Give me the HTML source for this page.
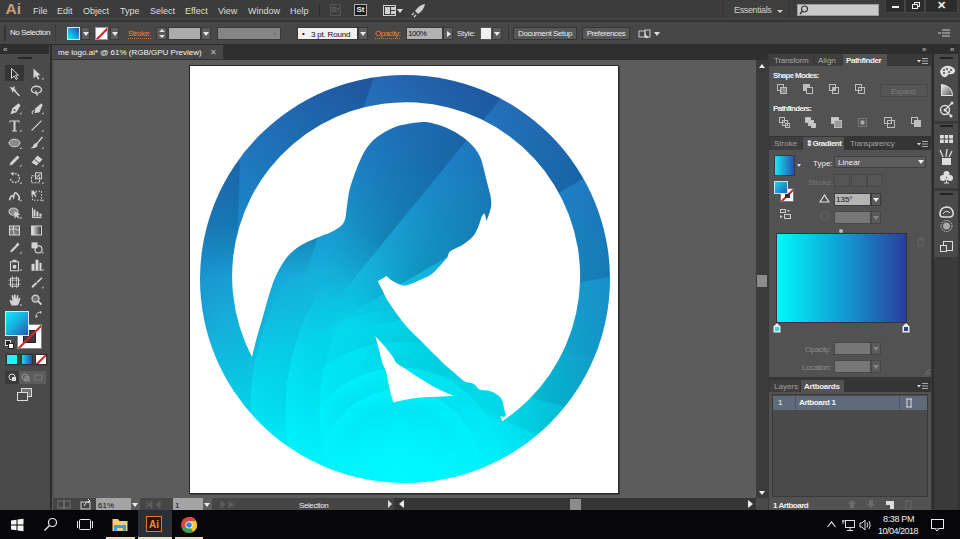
<!DOCTYPE html>
<html><head><meta charset="utf-8">
<style>
*{margin:0;padding:0;box-sizing:border-box}
html,body{width:960px;height:539px;overflow:hidden;background:#5c5c5c;font-family:"Liberation Sans",sans-serif;color:#e0e0e0}
.a{position:absolute}
.t{position:absolute;white-space:nowrap;font-size:9px;line-height:10px;color:#e6e6e6}
#menu{left:0;top:0;width:960px;height:21px;background:linear-gradient(180deg,#3c3c3c 0px,#3c3c3c 17px,#434343 18px,#434343 20px,#333 20px)}
.m{position:absolute;top:5px;font-size:9px;line-height:12px;color:#dcdcdc;white-space:nowrap}
#ctrl{left:0;top:21px;width:960px;height:24px;background:#474747;border-top:1px solid #343434;border-bottom:1px solid #2c2c2c}
#tools{left:0;top:45px;width:52px;height:465px;background:#4a4a4a;border-right:2px solid #2c2c2c}
#tabbar{left:51px;top:45px;width:717px;height:15px;background:#2f2f2f}
#canvas{left:52px;top:60px;width:704px;height:438px;background:#5c5c5c;border-left:2px solid #545454}
#vscroll{left:756px;top:60px;width:12px;height:438px;background:#3b3b3b}
#status{left:53px;top:498px;width:715px;height:12px;background:#3f3f3f}
#dock{left:768px;top:45px;width:164px;height:465px;background:#3a3a3a}
#strip{left:932px;top:45px;width:28px;height:465px;background:#3a3a3a}
#task{left:0;top:510px;width:960px;height:29px;background:#07060b}
.dd{position:absolute;background:#5d5d5d;border:1px solid #3a3a3a}
.dd:after{content:"";position:absolute;left:50%;top:50%;margin-left:-3px;margin-top:-2px;border-left:3px solid transparent;border-right:3px solid transparent;border-top:4px solid #e8e8e8}
.fld{position:absolute;background:#a9a9a9;border:1px solid #393939}
.btn{position:absolute;background:#575757;border:1px solid #353535;font-size:8px;line-height:11px;color:#e8e8e8;text-align:center;white-space:nowrap;letter-spacing:-0.4px}
.orng{color:#e08a3a}
</style></head><body>
<!-- MENU BAR -->
<div id="menu" class="a">
  <div class="a" style="left:5.5px;top:0px;font-size:15.5px;line-height:18px;color:#caa07c;font-weight:bold;letter-spacing:0px">Ai</div>
  <div class="m" style="left:33px">File</div>
  <div class="m" style="left:57px">Edit</div>
  <div class="m" style="left:83px">Object</div>
  <div class="m" style="left:120px">Type</div>
  <div class="m" style="left:150px">Select</div>
  <div class="m" style="left:185px">Effect</div>
  <div class="m" style="left:218px">View</div>
  <div class="m" style="left:248px">Window</div>
  <div class="m" style="left:290px">Help</div>
  <div class="a" style="left:319px;top:4px;width:1px;height:13px;background:#2c2c2c"></div>
  <div class="a" style="left:330px;top:4px;width:11px;height:12px;border:1px solid #555;background:#3e3e3e;font-size:7px;line-height:10px;color:#5c5c5c;text-align:center;font-weight:bold">Br</div>
  <div class="a" style="left:354px;top:4px;width:13px;height:12px;border:1px solid #b0b0b0;background:#1c1c1c;font-size:8px;line-height:10px;color:#e8e8e8;text-align:center;font-weight:bold">St</div>
  <div class="a" style="left:383px;top:5px;width:13px;height:11px;border:1px solid #d0d0d0;background:#3c3c3c"><div class="a" style="left:1px;top:1px;width:5px;height:7px;background:#d0d0d0"></div><div class="a" style="left:7px;top:1px;width:4px;height:3px;background:#d0d0d0"></div><div class="a" style="left:7px;top:5px;width:4px;height:3px;background:#d0d0d0"></div></div>
  <div class="a" style="left:397px;top:9px;border-left:3px solid transparent;border-right:3px solid transparent;border-top:4px solid #ddd"></div>
  <svg class="a" style="left:411px;top:3px" width="16" height="15" viewBox="0 0 16 15"><path d="M14,1 Q8,2 4,8 L7,11 Q13,7 14,1 Z" fill="#d0d0d0"/><path d="M3,10 L1,12 M5,12 L3,14" stroke="#d0d0d0" stroke-width="1.3"/></svg>
  <div class="a" style="left:723px;top:1px;width:66px;height:17px;background:#3f3f3f;border-left:1px solid #363636;border-right:1px solid #363636"></div><div class="m" style="left:734px;top:4px;color:#cfcfcf;letter-spacing:-0.35px">Essentials</div>
  <div class="a" style="left:777px;top:10px;border-left:3px solid transparent;border-right:3px solid transparent;border-top:3px solid #ccc"></div>
  <div class="a" style="left:797px;top:4px;width:82px;height:12px;background:#c9c9c9;border:1px solid #9a9a9a"></div>
  <svg class="a" style="left:799px;top:5px" width="10" height="10" viewBox="0 0 10 10"><circle cx="5.5" cy="4" r="3" fill="none" stroke="#333" stroke-width="1.2"/><path d="M3.5,6 L1,9" stroke="#333" stroke-width="1.4"/></svg>
  <div class="a" style="left:885px;top:0;width:20px;height:13px;background:#2c2c2c;border:1px solid #444;border-top:none"><div class="a" style="left:6px;top:6px;width:7px;height:2px;background:#eee"></div></div>
  <div class="a" style="left:905px;top:0;width:20px;height:13px;background:#2c2c2c;border:1px solid #444;border-top:none"><div class="a" style="left:8px;top:2px;width:6px;height:5px;border:1px solid #eee"></div><div class="a" style="left:6px;top:4px;width:6px;height:5px;border:1px solid #eee;background:#2c2c2c"></div></div>
  <div class="a" style="left:925px;top:0;width:33px;height:13px;background:#2c2c2c;border:1px solid #444;border-top:none;font-size:11px;line-height:11px;color:#f0f0f0;text-align:center;font-weight:bold">&#x2715;</div>
</div>
<!-- CONTROL BAR -->
<div id="ctrl" class="a">
  <div class="a" style="left:4px;top:3px;width:2px;height:16px;background:#333"></div>
  <div class="t" style="left:10px;top:6px;font-size:8px;color:#f0f0f0;letter-spacing:-0.45px">No Selection</div>
  <div class="a" style="left:55px;top:3px;width:1px;height:16px;background:#3a3a3a"></div>
  <div class="a" style="left:67px;top:5px;width:13px;height:13px;border:1px solid #cfe8f5;background:linear-gradient(45deg,#10f0f8,#1aa0dc 50%,#2050b0)"></div>
  <div class="dd" style="left:81px;top:5px;width:9px;height:13px"></div>
  <div class="a" style="left:95px;top:5px;width:13px;height:13px;background:#fff;border:1px solid #999;overflow:hidden"><div class="a" style="left:-3px;top:5px;width:18px;height:1.5px;background:#e01020;transform:rotate(-45deg)"></div></div>
  <div class="dd" style="left:110px;top:5px;width:9px;height:13px"></div>
  <div class="t orng" style="left:128px;top:7px;font-size:8px;border-bottom:1px dotted #c07a30;line-height:9px;letter-spacing:-0.4px">Stroke:</div>
  <div class="a" style="left:156px;top:5px;width:11px;height:13px;background:#5a5a5a;border:1px solid #3a3a3a"><div class="a" style="left:2px;top:1px;border-left:3px solid transparent;border-right:3px solid transparent;border-bottom:3px solid #ddd"></div><div class="a" style="left:2px;top:7px;border-left:3px solid transparent;border-right:3px solid transparent;border-top:3px solid #ddd"></div></div>
  <div class="fld" style="left:168px;top:5px;width:33px;height:13px;background:#ababab"></div>
  <div class="dd" style="left:201px;top:5px;width:10px;height:13px"></div>
  <div class="fld" style="left:217px;top:5px;width:64px;height:13px;background:#868686"></div>
  <div class="a" style="left:273px;top:11px;border-left:2px solid transparent;border-right:2px solid transparent;border-top:2px solid #6a6a6a"></div>
  <div class="fld" style="left:297px;top:5px;width:61px;height:13px;background:#f0f0f0"></div>
  <div class="t" style="left:302px;top:7px;font-size:8px;color:#111">&#8226;</div><div class="t" style="left:311px;top:7.5px;font-size:8px;color:#111;letter-spacing:-0.2px">3 pt. Round</div>
  <div class="dd" style="left:358px;top:5px;width:10px;height:13px"></div>
  <div class="t orng" style="left:375px;top:7px;font-size:8px;border-bottom:1px dotted #c07a30;line-height:9px;letter-spacing:-0.5px">Opacity:</div>
  <div class="fld" style="left:406px;top:5px;width:37px;height:13px;background:#b2b2b2"></div>
  <div class="t" style="left:408px;top:7px;font-size:8px;color:#111;letter-spacing:-0.5px">100%</div>
  <div class="a" style="left:443px;top:5px;width:10px;height:13px;background:#5d5d5d;border:1px solid #3a3a3a"><div class="a" style="left:3px;top:3px;border-top:3px solid transparent;border-bottom:3px solid transparent;border-left:4px solid #e8e8e8"></div></div>
  <div class="t" style="left:457px;top:7px;font-size:8px;letter-spacing:-0.3px">Style:</div>
  <div class="a" style="left:480px;top:5px;width:12px;height:13px;background:#efefef;border:1px solid #555"></div>
  <div class="dd" style="left:492px;top:5px;width:10px;height:13px"></div>
  <div class="a" style="left:508px;top:3px;width:1px;height:16px;background:#363636"></div>
  <div class="btn" style="left:513px;top:5px;width:64px;height:13px">Document Setup</div>
  <div class="btn" style="left:582px;top:5px;width:48px;height:13px">Preferences</div>
  <svg class="a" style="left:638px;top:7px" width="14" height="11" viewBox="0 0 14 11"><rect x="1" y="2" width="6" height="6" fill="none" stroke="#ccc"/><rect x="7" y="1" width="5" height="7" fill="none" stroke="#ccc"/><path d="M6,4 L11,9 L8,9 Z" fill="#ddd"/></svg>
  <div class="a" style="left:654px;top:10px;border-left:3px solid transparent;border-right:3px solid transparent;border-top:4px solid #ddd"></div>
  <svg class="a" style="left:938px;top:7px" width="12" height="9" viewBox="0 0 12 9"><path d="M0,4 L3,4" stroke="#ccc"/><path d="M4,1 L12,1 M4,4 L12,4 M4,7 L12,7" stroke="#ccc" stroke-width="1"/></svg>
</div>
<!-- TOOLS -->
<div id="tools" class="a">
  <div class="a" style="left:0;top:0;width:49px;height:9px;background:#2e2e2e"></div>
  <div class="t" style="left:3px;top:0;font-size:8px;line-height:9px;color:#ccc">&#171;</div>
  <div class="a" style="left:18px;top:12px;width:14px;height:2px;background:#262626"></div>
  <div class="a" style="left:5px;top:20px;width:19px;height:16px;background:#353535"></div>
  <svg class="a" style="left:0;top:0" width="51" height="465" viewBox="0 45 51 465"><g transform="translate(8.5,67.4)"><path d="M3,1 L3,11 L5.5,8.5 L7.5,12 L9,11.3 L7,7.8 L10,7.8 Z" fill="none" stroke="#d4d4d4" stroke-width="1"/></g><g transform="translate(30.5,67.4)"><path d="M3,1 L3,11 L5.5,8.5 L7.5,12 L9,11.3 L7,7.8 L10,7.8 Z" fill="#d4d4d4"/></g><path d="M41.5,79.4 L43.5,77.4 L43.5,79.4 Z" fill="#d4d4d4"/><g transform="translate(8.5,84.8)"><path d="M1,2 L4,3 L6,1 L6,4 L8,6 L5,6 L4,8 L3,5 Z" fill="#d4d4d4"/><path d="M6,6 L11,11" stroke="#d4d4d4" stroke-width="1.5"/></g><g transform="translate(30.5,84.8)"><ellipse cx="6" cy="5" rx="5" ry="3.5" fill="none" stroke="#d4d4d4" stroke-width="1.4"/><path d="M5,6 L7,11" stroke="#d4d4d4" stroke-width="1.3"/></g><g transform="translate(8.5,102.2)"><path d="M10,1 L12,3 L8,10 L2,12 L4,6 Z" fill="#d4d4d4"/><circle cx="6" cy="8" r="1" fill="#4b4b4b"/></g><path d="M19.5,114.2 L21.5,112.2 L21.5,114.2 Z" fill="#d4d4d4"/><g transform="translate(30.5,102.2)"><path d="M11,1 L12,3 L9,10 L4,11 L5,6 Z" fill="#d4d4d4"/><path d="M4,8 Q0,9 2,12" fill="none" stroke="#d4d4d4"/></g><path d="M41.5,114.2 L43.5,112.2 L43.5,114.2 Z" fill="#d4d4d4"/><g transform="translate(8.5,119.6)"><path d="M1,1 L11,1 L11,3 L10,3 L10,2 L7,2 L7,11 L8.5,11 L8.5,12 L3.5,12 L3.5,11 L5,11 L5,2 L2,2 L2,3 L1,3 Z" fill="#d4d4d4"/></g><path d="M19.5,131.6 L21.5,129.6 L21.5,131.6 Z" fill="#d4d4d4"/><g transform="translate(30.5,119.6)"><path d="M1,11 L11,1" stroke="#d4d4d4" stroke-width="1.2"/></g><path d="M41.5,131.6 L43.5,129.6 L43.5,131.6 Z" fill="#d4d4d4"/><g transform="translate(8.5,137)"><ellipse cx="6" cy="6" rx="5.5" ry="3.8" fill="#8a8a8a" stroke="#d4d4d4" stroke-width="1"/></g><path d="M19.5,149 L21.5,147 L21.5,149 Z" fill="#d4d4d4"/><g transform="translate(30.5,137)"><path d="M12,0 L6,7" stroke="#d4d4d4" stroke-width="1.3"/><path d="M6,6 Q8,8 6,10 Q3,12 0,11 Q3,10 3,8 Q4,6 6,6 Z" fill="#d4d4d4"/></g><path d="M41.5,149 L43.5,147 L43.5,149 Z" fill="#d4d4d4"/><g transform="translate(8.5,154.4)"><path d="M9,1 L11,3 L4,10 L1,11 L2,8 Z" fill="#d4d4d4"/></g><path d="M19.5,166.4 L21.5,164.4 L21.5,166.4 Z" fill="#d4d4d4"/><g transform="translate(30.5,154.4)"><path d="M7,1 L12,5 L6,11 L1,8 Z" fill="#d4d4d4"/><path d="M4,5 L9,9" stroke="#4b4b4b"/></g><path d="M41.5,166.4 L43.5,164.4 L43.5,166.4 Z" fill="#d4d4d4"/><g transform="translate(8.5,171.8)"><path d="M2,7 A4.5,4.5 0 1 0 5,2" fill="none" stroke="#d4d4d4" stroke-width="1.2" stroke-dasharray="2,1"/><path d="M5,0 L5,4 L2,2 Z" fill="#d4d4d4"/></g><path d="M19.5,183.8 L21.5,181.8 L21.5,183.8 Z" fill="#d4d4d4"/><g transform="translate(30.5,171.8)"><rect x="1" y="4" width="8" height="7" fill="none" stroke="#d4d4d4" stroke-dasharray="2,1"/><rect x="5" y="1" width="6" height="6" fill="none" stroke="#d4d4d4"/><path d="M6,6 L10,2" stroke="#d4d4d4"/></g><path d="M41.5,183.8 L43.5,181.8 L43.5,183.8 Z" fill="#d4d4d4"/><g transform="translate(8.5,189.2)"><path d="M1,11 Q3,4 5,8 Q6,1 9,5 Q12,8 10,11" fill="none" stroke="#d4d4d4" stroke-width="1.6"/></g><path d="M19.5,201.2 L21.5,199.2 L21.5,201.2 Z" fill="#d4d4d4"/><g transform="translate(30.5,189.2)"><rect x="2" y="2" width="9" height="9" fill="none" stroke="#d4d4d4" stroke-dasharray="1.5,1.5"/><path d="M1,1 L1,7 L3,5 L5,8 L6,7 L4,4 L7,4 Z" fill="#d4d4d4"/></g><path d="M41.5,201.2 L43.5,199.2 L43.5,201.2 Z" fill="#d4d4d4"/><g transform="translate(8.5,206.6)"><ellipse cx="5" cy="5" rx="4.5" ry="3.5" fill="#8a8a8a" stroke="#d4d4d4"/><path d="M6,5 L6,12 L8,10 L10,12 L11,11 L9,9 L12,8 Z" fill="#d4d4d4"/></g><path d="M19.5,218.6 L21.5,216.6 L21.5,218.6 Z" fill="#d4d4d4"/><g transform="translate(30.5,206.6)"><path d="M2,1 L2,11 L11,11" fill="none" stroke="#d4d4d4"/><rect x="3" y="3" width="2" height="7" fill="#d4d4d4"/><rect x="6" y="5" width="2" height="5" fill="#d4d4d4"/><rect x="9" y="7" width="2" height="3" fill="#d4d4d4"/></g><g transform="translate(8.5,224)"><rect x="1" y="2" width="10" height="9" fill="#777" stroke="#d4d4d4"/><path d="M1,6 Q6,3 11,7 M5,2 Q4,7 6,11" fill="none" stroke="#d4d4d4"/></g><g transform="translate(30.5,224)"><defs><linearGradient id="tg"><stop offset="0" stop-color="#eee"/><stop offset="1" stop-color="#333"/></linearGradient></defs><rect x="1" y="2" width="10" height="9" fill="url(#tg)" stroke="#d4d4d4"/></g><g transform="translate(8.5,241.4)"><path d="M9,1 L11,3 L9,5 L4,10 L2,11 L2,9 L7,4 Z" fill="#d4d4d4"/></g><path d="M19.5,253.4 L21.5,251.4 L21.5,253.4 Z" fill="#d4d4d4"/><g transform="translate(30.5,241.4)"><rect x="1" y="1" width="6" height="6" fill="#d4d4d4"/><circle cx="8" cy="8" r="3.5" fill="none" stroke="#d4d4d4" stroke-width="1.2"/></g><path d="M41.5,253.4 L43.5,251.4 L43.5,253.4 Z" fill="#d4d4d4"/><g transform="translate(8.5,258.8)"><rect x="2" y="3" width="8" height="9" fill="none" stroke="#d4d4d4"/><rect x="4" y="1" width="4" height="2" fill="#d4d4d4"/><circle cx="6" cy="8" r="2" fill="#d4d4d4"/></g><path d="M19.5,270.8 L21.5,268.8 L21.5,270.8 Z" fill="#d4d4d4"/><g transform="translate(30.5,258.8)"><rect x="1" y="5" width="3" height="7" fill="#d4d4d4"/><rect x="5" y="1" width="3" height="11" fill="#d4d4d4"/><rect x="9" y="4" width="2" height="8" fill="#d4d4d4"/></g><path d="M41.5,270.8 L43.5,268.8 L43.5,270.8 Z" fill="#d4d4d4"/><g transform="translate(8.5,276.2)"><rect x="2" y="2" width="8" height="8" fill="none" stroke="#d4d4d4"/><path d="M0,4 L12,4 M0,8 L12,8 M4,0 L4,12 M8,0 L8,12" stroke="#d4d4d4" stroke-width="0.7"/></g><g transform="translate(30.5,276.2)"><path d="M11,1 L12,2 L3,11 L1,12 L2,9 Z" fill="#d4d4d4"/><path d="M5,5 L8,8" stroke="#4b4b4b"/></g><path d="M41.5,288.2 L43.5,286.2 L43.5,288.2 Z" fill="#d4d4d4"/><g transform="translate(8.5,293.6)"><path d="M3,12 L1,7 L2,6 L4,8 L3,2 L4.5,1.5 L5.5,6 L5.5,1 L7,1 L7.5,6 L8.5,1.5 L10,2 L9.5,6.5 L11,4 L12,5 L10,11 L8,12 Z" fill="#d4d4d4"/></g><path d="M19.5,305.6 L21.5,303.6 L21.5,305.6 Z" fill="#d4d4d4"/><g transform="translate(30.5,293.6)"><circle cx="5" cy="5" r="3.5" fill="#777" stroke="#d4d4d4" stroke-width="1.3"/><path d="M7.5,7.5 L11,11" stroke="#d4d4d4" stroke-width="2"/></g></svg><div class="a" style="left:5px;top:266px;width:24px;height:25px;background:linear-gradient(135deg,#12e6f6 0%,#18b4e2 45%,#2456b0 100%);border:1px solid #dde6ee;z-index:2"></div>
<div class="a" style="left:17px;top:279px;width:25px;height:25px;background:#fff;border:1px solid #888;overflow:hidden"><div class="a" style="left:5px;top:5px;width:13px;height:13px;background:#3a3a3a;border:1px solid #222"></div><div class="a" style="left:-6px;top:11px;width:36px;height:2px;background:#e0202a;transform:rotate(-45deg)"></div></div>
<svg class="a" style="left:35px;top:266px" width="8" height="8" viewBox="0 0 8 8"><path d="M1,6 Q1,1 6,1" fill="none" stroke="#ccc"/><path d="M5,0 L7,1 L5,3 Z M0,5 L1,7 L3,5 Z" fill="#ccc"/></svg>
<svg class="a" style="left:5px;top:295px" width="9" height="9" viewBox="0 0 9 9"><rect x="0.5" y="0.5" width="5" height="5" fill="#222" stroke="#ddd"/><rect x="3.5" y="3.5" width="5" height="5" fill="#fff" stroke="#222"/></svg>
<div class="a" style="left:5px;top:308px;width:43px;height:13px;background:#404040"></div>
<div class="a" style="left:6px;top:309px;width:12px;height:11px;border:1px solid #333;background:#1ef2f6"></div>
<div class="a" style="left:21px;top:309px;width:12px;height:11px;border:1px solid #333;background:linear-gradient(90deg,#16d8f0,#2450a8)"></div>
<div class="a" style="left:35px;top:309px;width:12px;height:11px;border:1px solid #333;background:#fff;overflow:hidden"><div class="a" style="left:-3px;top:4px;width:16px;height:2px;background:#e0202a;transform:rotate(-45deg)"></div></div>
<div class="a" style="left:5px;top:326px;width:41px;height:13px;background:#3a3a3a"></div>
<div class="a" style="left:19px;top:326px;width:27px;height:13px;background:#5c5c5c"></div>
<svg class="a" style="left:7px;top:327px" width="38" height="11" viewBox="0 0 38 11"><circle cx="5" cy="5" r="3" fill="none" stroke="#ddd"/><rect x="5" y="5" width="4" height="4" fill="#ddd"/><circle cx="18" cy="5" r="3" fill="none" stroke="#999"/><rect x="18" y="5" width="4" height="4" fill="none" stroke="#999"/><rect x="28" y="3" width="7" height="5" fill="none" stroke="#777"/></svg>
<svg class="a" style="left:16px;top:343px" width="17" height="14" viewBox="0 0 17 14"><rect x="5.5" y="0.5" width="10" height="8" fill="#777" stroke="#ddd"/><rect x="1.5" y="4.5" width="10" height="8" fill="#4b4b4b" stroke="#ddd"/></svg>


</div>
<div id="tabbar" class="a">
  <div class="a" style="left:1px;top:0;width:171px;height:14px;background:#474747"></div>
  <div class="t" style="left:7px;top:3px;font-size:8px;color:#f4f4f4">me logo.ai* @ 61% (RGB/GPU Preview)</div>
  <div class="t" style="left:159px;top:3px;font-size:8px;color:#bbb">&#x2715;</div>
</div>
<div id="canvas" class="a"></div>
<div id="vscroll" class="a">
  <div class="a" style="left:3px;top:4px;border-left:3px solid transparent;border-right:3px solid transparent;border-bottom:4px solid #eee"></div>
  <div class="a" style="left:1px;top:215px;width:10px;height:12px;background:#8c8c8c"></div>
  <div class="a" style="left:3px;top:431px;border-left:3px solid transparent;border-right:3px solid transparent;border-top:4px solid #eee"></div>
</div>
<div id="status" class="a">
  <div class="a" style="left:0;top:0;width:341px;height:12px;background:#454545"></div>
<svg class="a" style="left:4px;top:1px" width="40" height="11" viewBox="0 0 40 11"><rect x="1" y="2" width="6" height="7" fill="none" stroke="#777"/><rect x="7" y="2" width="6" height="7" fill="none" stroke="#777"/><rect x="24" y="3" width="9" height="7" fill="none" stroke="#ccc"/><path d="M27,7 Q28,3 33,2 L31,0 M33,2 L31,4" fill="none" stroke="#ddd"/></svg>
<div class="a" style="left:43px;top:0;width:35px;height:12px;background:#a4a4a4"></div>
<div class="t" style="left:45px;top:3px;font-size:8px;color:#111">61%</div>
<div class="a" style="left:78px;top:0;width:9px;height:12px;background:#5c5c5c"><div class="a" style="left:1px;top:5px;border-left:3px solid transparent;border-right:3px solid transparent;border-top:4px solid #eee"></div></div>
<svg class="a" style="left:93px;top:2px" width="30" height="9" viewBox="0 0 30 9"><path d="M1,1 L1,8 M6,1 L2,4.5 L6,8 Z M14,1 L10,4.5 L14,8 Z" fill="#5e5e5e" stroke="#5e5e5e"/></svg>
<div class="a" style="left:120px;top:0;width:30px;height:12px;background:#a4a4a4"></div>
<div class="t" style="left:122px;top:3px;font-size:8px;color:#111">1</div>
<div class="a" style="left:150px;top:0;width:9px;height:12px;background:#5c5c5c"><div class="a" style="left:1px;top:5px;border-left:3px solid transparent;border-right:3px solid transparent;border-top:4px solid #eee"></div></div>
<svg class="a" style="left:166px;top:2px" width="30" height="9" viewBox="0 0 30 9"><path d="M2,1 L6,4.5 L2,8 Z M10,1 L14,4.5 L10,8 Z M15,1 L15,8" fill="#5e5e5e" stroke="#5e5e5e"/></svg>
<div class="t" style="left:246px;top:3px;font-size:8px;color:#eee;letter-spacing:-0.4px">Selection</div>
<div class="a" style="left:335px;top:2px;border-top:4px solid transparent;border-bottom:4px solid transparent;border-left:4px solid #ddd"></div>
<div class="a" style="left:341px;top:0;width:374px;height:12px;background:#353535"></div>
<div class="a" style="left:346px;top:2px;border-top:4px solid transparent;border-bottom:4px solid transparent;border-right:5px solid #eee"></div>
<div class="a" style="left:517px;top:1px;width:11px;height:11px;background:#8c8c8c"></div>
<div class="a" style="left:695px;top:2px;border-top:4px solid transparent;border-bottom:4px solid transparent;border-left:5px solid #eee"></div>
<div class="a" style="left:703px;top:0;width:12px;height:12px;background:#4a4a4a"></div>

</div>
<div id="dock" class="a">
  <div class="a" style="left:0;top:0;width:164px;height:9px;background:#2e2e2e"></div>
<div class="t" style="left:154px;top:0;font-size:8px;line-height:9px;color:#ccc">&#187;</div>
<!-- panel 1 -->
<div class="a" style="left:1px;top:9px;width:162px;height:12px;background:#383838"></div>
<div class="a" style="left:2px;top:9px;width:43px;height:12px;background:#3f3f3f"></div>
<div class="t" style="left:6px;top:11px;font-size:8px;color:#a8a8a8;letter-spacing:-0.2px">Transform</div>
<div class="a" style="left:46px;top:9px;width:28px;height:12px;background:#3f3f3f"></div>
<div class="t" style="left:50px;top:11px;font-size:8px;color:#a8a8a8">Align</div>
<div class="a" style="left:75px;top:9px;width:44px;height:12px;background:#525252"></div>
<div class="t" style="left:78px;top:11px;font-size:8px;color:#f0f0f0;font-weight:bold;letter-spacing:-0.45px">Pathfinder</div>
<svg class="a" style="left:149px;top:13px" width="12" height="7" viewBox="0 0 12 7"><path d="M0,2 L4,2 L2,4.5 Z" fill="#ddd"/><path d="M5,0.5 L11,0.5 M5,3 L11,3 M5,5.5 L11,5.5" stroke="#aaa"/></svg>
<div class="a" style="left:1px;top:21px;width:162px;height:70px;background:#525252"></div>
<div class="t" style="left:5px;top:26px;font-size:8px;color:#f0f0f0;font-weight:bold;letter-spacing:-0.7px">Shape Modes:</div>
<svg class="a" style="left:1px;top:21px" width="162" height="69" viewBox="0 0 162 69">
 <g fill="none" stroke="#bdbdbd" stroke-width="1">
  <rect x="8.5" y="18.5" width="6" height="6"/><rect x="11.5" y="21.5" width="6" height="6" fill="#8a8a8a"/>
  <rect x="34.5" y="18.5" width="6" height="6" fill="#bbb"/><rect x="37.5" y="21.5" width="6" height="6" fill="#505050"/>
  <rect x="60.5" y="18.5" width="6" height="6"/><rect x="63.5" y="21.5" width="6" height="6"/><rect x="63.5" y="21.5" width="3" height="3" fill="#bbb"/>
  <rect x="86.5" y="18.5" width="6" height="6"/><rect x="89.5" y="21.5" width="6" height="6"/><rect x="89.5" y="21.5" width="3" height="3" fill="#505050"/>
 </g>
 <rect x="111.5" y="18.5" width="47" height="12" fill="#555" stroke="#484848"/>
 <text x="122" y="27.5" font-size="8" fill="#7a7a7a" font-family="Liberation Sans" letter-spacing="-0.5">Expand</text>
 <g fill="none" stroke="#bdbdbd" stroke-width="1">
  <rect x="10.5" y="51.5" width="5" height="5"/><rect x="13.5" y="54.5" width="5" height="5"/><rect x="16.5" y="57.5" width="4" height="4"/>
  <rect x="36.5" y="51.5" width="5" height="5" fill="#ccc"/><rect x="39.5" y="54.5" width="5" height="5" fill="#ccc"/><rect x="42.5" y="57.5" width="4" height="4" fill="#ccc"/>
  <rect x="62.5" y="51.5" width="7" height="6" fill="#ccc"/><rect x="65.5" y="54.5" width="7" height="7" fill="#999"/>
  <rect x="89.5" y="52.5" width="8" height="8" stroke="#777"/><rect x="91.5" y="54.5" width="4" height="4" fill="#aaa" stroke="none"/>
  <rect x="115.5" y="51.5" width="7" height="6"/><rect x="118.5" y="54.5" width="7" height="7"/>
  <rect x="142.5" y="51.5" width="6" height="6"/><rect x="145.5" y="54.5" width="6" height="6" fill="#bdbdbd"/>
 </g>
</svg>
<div class="t" style="left:5px;top:59px;font-size:8px;color:#f0f0f0;font-weight:bold;letter-spacing:-0.7px">Pathfinders:</div>
<!-- panel 2 -->
<div class="a" style="left:1px;top:91px;width:162px;height:14px;background:#353535"></div>
<div class="a" style="left:2px;top:92px;width:32px;height:13px;background:#3e3e3e"></div>
<div class="t" style="left:6px;top:94px;font-size:8px;color:#a0a0a0">Stroke</div>
<div class="a" style="left:35px;top:92px;width:41px;height:13px;background:#525252"></div>
<div class="t" style="left:38px;top:94px;font-size:8px;color:#f0f0f0;font-weight:bold;letter-spacing:-0.5px">&#8661;Gradient</div>
<div class="t" style="left:82px;top:94px;font-size:8px;color:#a0a0a0;letter-spacing:-0.35px">Transparency</div>
<svg class="a" style="left:149px;top:96px" width="12" height="7" viewBox="0 0 12 7"><path d="M0,2 L4,2 L2,4.5 Z" fill="#ddd"/><path d="M5,0.5 L11,0.5 M5,3 L11,3 M5,5.5 L11,5.5" stroke="#aaa"/></svg>
<div class="a" style="left:1px;top:105px;width:162px;height:227px;background:#525252"></div>
<div class="a" style="left:6px;top:110px;width:21px;height:21px;background:linear-gradient(90deg,#16e8f4,#2650b0);border:1px solid #3a3a3a"></div>
<div class="a" style="left:29px;top:119px;border-left:2px solid transparent;border-right:2px solid transparent;border-top:3px solid #ddd"></div>
<div class="a" style="left:12px;top:143px;width:14px;height:14px;background:#fff;border:1px solid #777;overflow:hidden"><div class="a" style="left:-3px;top:5px;width:20px;height:2px;background:#e0202a;transform:rotate(-45deg)"></div><div class="a" style="left:4px;top:4px;width:5px;height:5px;background:#333"></div></div>
<div class="a" style="left:6px;top:136px;width:14px;height:13px;background:linear-gradient(135deg,#18d8f0,#2060b8);border:1px solid #cfe0ea"></div>
<svg class="a" style="left:12px;top:164px" width="11" height="10" viewBox="0 0 11 10"><rect x="0.5" y="0.5" width="5" height="3" fill="none" stroke="#ccc"/><rect x="4.5" y="5.5" width="6" height="4" fill="none" stroke="#ccc"/><path d="M7,1 L10,1 L8.5,3 Z M0,6 L3,8 L0,9 Z" fill="#ccc"/></svg>
<div class="t" style="left:45px;top:114px;font-size:8px;color:#eee">Type:</div>
<div class="a" style="left:66px;top:111px;width:92px;height:12px;background:#5c5c5c;border:1px solid #404040"></div>
<div class="t" style="left:70px;top:113px;font-size:8px;color:#eee">Linear</div>
<div class="a" style="left:150px;top:115px;border-left:3px solid transparent;border-right:3px solid transparent;border-top:4px solid #eee"></div>
<div class="t" style="left:40px;top:133px;font-size:8px;color:#777">Stroke:</div>
<div class="a" style="left:66px;top:129px;width:16px;height:13px;background:#555;border:1px solid #484848"></div>
<div class="a" style="left:83px;top:129px;width:16px;height:13px;background:#555;border:1px solid #484848"></div>
<div class="a" style="left:99px;top:129px;width:16px;height:13px;background:#555;border:1px solid #484848"></div>
<svg class="a" style="left:51px;top:149px" width="11" height="9" viewBox="0 0 11 9"><path d="M1,8 L5.5,1 L10,8 Z" fill="none" stroke="#ddd" stroke-width="1.2"/></svg>
<div class="a" style="left:66px;top:148px;width:37px;height:13px;background:#b4b4b4;border:1px solid #3c3c3c"></div>
<div class="t" style="left:68px;top:150px;font-size:8px;color:#111">135&#176;</div>
<div class="a" style="left:103px;top:148px;width:10px;height:13px;background:#5c5c5c;border:1px solid #3c3c3c"><div class="a" style="left:1px;top:4px;border-left:3px solid transparent;border-right:3px solid transparent;border-top:4px solid #eee"></div></div>
<svg class="a" style="left:51px;top:166px" width="11" height="10" viewBox="0 0 11 10"><circle cx="5.5" cy="5" r="4" fill="none" stroke="#666"/></svg>
<div class="a" style="left:66px;top:166px;width:37px;height:13px;background:#777;border:1px solid #484848"></div>
<div class="a" style="left:103px;top:166px;width:10px;height:13px;background:#5a5a5a;border:1px solid #484848"><div class="a" style="left:1px;top:4px;border-left:3px solid transparent;border-right:3px solid transparent;border-top:4px solid #888"></div></div>
<div class="a" style="left:71px;top:184px;width:4px;height:4px;border-radius:2px;background:#bbb"></div>
<div class="a" style="left:8px;top:188px;width:131px;height:90px;background:linear-gradient(90deg,#00f8fb 0%,#1296cf 55%,#2a3d9e 100%);border:1px solid #333"></div>
<svg class="a" style="left:4px;top:277px" width="142" height="11" viewBox="0 0 142 11"><path d="M1.5,4.5 L5,1 L8.5,4.5 L8.5,10.5 L1.5,10.5 Z" fill="#eee" stroke="#999"/><rect x="3" y="5" width="4" height="4" fill="#1ae0ee"/><path d="M130.5,4.5 L134,1 L137.5,4.5 L137.5,10.5 L130.5,10.5 Z" fill="#eee" stroke="#999"/><rect x="132" y="5" width="4" height="4" fill="#2a3f9a"/></svg>
<svg class="a" style="left:148px;top:192px" width="9" height="10" viewBox="0 0 9 10"><path d="M1,2 L8,2 M3,2 L3,1 L6,1 L6,2 M2,3 L2,9 L7,9 L7,3" fill="none" stroke="#666"/></svg>
<div class="t" style="left:37px;top:300px;font-size:8px;color:#8a8a8a;letter-spacing:-0.5px">Opacity:</div>
<div class="a" style="left:66px;top:297px;width:37px;height:13px;background:#777;border:1px solid #484848"></div>
<div class="a" style="left:103px;top:297px;width:10px;height:13px;background:#5a5a5a;border:1px solid #484848"><div class="a" style="left:1px;top:4px;border-left:3px solid transparent;border-right:3px solid transparent;border-top:4px solid #888"></div></div>
<div class="t" style="left:34px;top:318px;font-size:8px;color:#8a8a8a;letter-spacing:-0.4px">Location:</div>
<div class="a" style="left:66px;top:315px;width:37px;height:13px;background:#777;border:1px solid #484848"></div>
<div class="a" style="left:103px;top:315px;width:10px;height:13px;background:#5a5a5a;border:1px solid #484848"><div class="a" style="left:1px;top:4px;border-left:3px solid transparent;border-right:3px solid transparent;border-top:4px solid #888"></div></div>
<svg class="a" style="left:156px;top:324px" width="7" height="7" viewBox="0 0 7 7"><path d="M6,0 L0,6 M6,3 L3,6" stroke="#777"/></svg>
<!-- panel 3 -->
<div class="a" style="left:1px;top:332px;width:162px;height:15px;background:#353535"></div>
<div class="a" style="left:2px;top:335px;width:30px;height:12px;background:#3e3e3e"></div>
<div class="t" style="left:6px;top:337px;font-size:8px;color:#a0a0a0">Layers</div>
<div class="a" style="left:33px;top:335px;width:43px;height:12px;background:#525252"></div>
<div class="t" style="left:36px;top:337px;font-size:8px;color:#f0f0f0;font-weight:bold;letter-spacing:-0.3px">Artboards</div>
<svg class="a" style="left:149px;top:338px" width="12" height="7" viewBox="0 0 12 7"><path d="M0,2 L4,2 L2,4.5 Z" fill="#ddd"/><path d="M5,0.5 L11,0.5 M5,3 L11,3 M5,5.5 L11,5.5" stroke="#aaa"/></svg>
<div class="a" style="left:1px;top:347px;width:162px;height:118px;background:#525252"></div>
<div class="a" style="left:4px;top:349px;width:156px;height:103px;background:#4b4b4b;border:1px solid #3a3a3a"></div>
<div class="a" style="left:5px;top:351px;width:154px;height:14px;background:#5f6b7b"></div>
<div class="a" style="left:27px;top:351px;width:1px;height:14px;background:#4c5562"></div>
<div class="a" style="left:131px;top:351px;width:1px;height:14px;background:#4c5562"></div>
<div class="t" style="left:10px;top:353px;font-size:8px;color:#f4f4f4">1</div>
<div class="t" style="left:31px;top:353px;font-size:8px;color:#f4f4f4;font-weight:bold;letter-spacing:-0.4px">Artboard 1</div>
<svg class="a" style="left:137px;top:353px" width="8" height="10" viewBox="0 0 8 10"><path d="M1,1 L7,1 M1,9 L7,9 M2,1 L2,9 M6,1 L6,9" stroke="#ddd"/></svg>
<div class="t" style="left:5px;top:456px;font-size:8px;color:#f0f0f0;font-weight:bold;letter-spacing:-0.5px">1 Artboard</div>
<svg class="a" style="left:80px;top:454px" width="80" height="11" viewBox="0 0 80 11"><path d="M4,1 L8,5 L6,5 L6,9 L2,9 L2,5 L0,5 Z" fill="#6a6a6a"/><path d="M23,9 L27,5 L25,5 L25,1 L21,1 L21,5 L19,5 Z" fill="#6a6a6a"/><rect x="38" y="2" width="8" height="8" fill="#ddd"/><rect x="38" y="6" width="4" height="4" fill="#505050"/><path d="M57,2 L64,2 M58,3 L58,10 L63,10 L63,3" fill="none" stroke="#6a6a6a"/></svg>

</div>
<div id="strip" class="a">
  <div class="a" style="left:0;top:0;width:2px;height:465px;background:#2c2c2c"></div>
<div class="a" style="left:2px;top:0;width:26px;height:9px;background:#2e2e2e"></div>
<div class="t" style="left:18px;top:0;font-size:8px;line-height:9px;color:#ccc">&#171;</div>
<div class="a" style="left:2px;top:9px;width:24px;height:67px;background:#4a4a4a"></div>
<div class="a" style="left:2px;top:79px;width:24px;height:64px;background:#4a4a4a"></div>
<div class="a" style="left:2px;top:146px;width:24px;height:66px;background:#4a4a4a"></div>
<div class="a" style="left:26px;top:0;width:2px;height:465px;background:#333"></div>
<div class="a" style="left:8px;top:12px;width:13px;height:2px;background:#222"></div>
<div class="a" style="left:8px;top:80px;width:13px;height:2px;background:#222"></div>
<div class="a" style="left:8px;top:148px;width:13px;height:2px;background:#222"></div>
<svg class="a" style="left:2px;top:9px" width="24" height="210" viewBox="0 0 24 210">
 <path d="M6,17 Q9,11 16,12 Q22,14 21,18 Q19,21 15,20 Q13,22 12,23 Q7,24 6,17 Z" fill="#ddd"/>
 <circle cx="10" cy="16" r="1" fill="#4a4a4a"/><circle cx="13" cy="15" r="1" fill="#4a4a4a"/><circle cx="17" cy="16" r="1" fill="#4a4a4a"/><circle cx="10" cy="19" r="1" fill="#4a4a4a"/><circle cx="15" cy="18" r="1" fill="#4a4a4a"/>
 <defs><linearGradient id="qg" x1="0" y1="0" x2="1" y2="1"><stop offset="0" stop-color="#f0f0f0"/><stop offset="1" stop-color="#555"/></linearGradient></defs><path d="M7.5,30.5 L7.5,41.5 L18.5,41.5 Q18.5,32 7.5,30.5 Z" fill="url(#qg)" stroke="#e8e8e8"/>
 <circle cx="11" cy="56" r="4.5" fill="none" stroke="#ddd" stroke-width="1.5"/><circle cx="11" cy="56" r="1.5" fill="#ddd"/><path d="M11,56 L18,49 M11,56 L17,62" stroke="#ddd" stroke-width="1.2"/><circle cx="18" cy="49" r="1.5" fill="#ddd"/><circle cx="17" cy="62" r="1.5" fill="#ddd"/>
 <rect x="6" y="81" width="13" height="8" fill="#ddd"/><path d="M6,85 L19,85 M10.3,81 L10.3,89 M14.6,81 L14.6,89" stroke="#4a4a4a"/>
 <rect x="8" y="104" width="9" height="7" fill="#ddd"/><path d="M9,103 L6,96 M12,103 L13,95 M15,103 L18,97" stroke="#ddd" stroke-width="1.3"/>
 <circle cx="12.5" cy="120" r="3" fill="#ddd"/><circle cx="9" cy="124" r="3" fill="#ddd"/><circle cx="16" cy="124" r="3" fill="#ddd"/><path d="M12.5,124 L12.5,129 M10,129 L15,129" stroke="#ddd"/>
 <path d="M6,160 Q6,154 12,153 Q18,153 19,158 Q20,163 15,163 L9,163 Q6,163 6,160 Z" fill="none" stroke="#ddd" stroke-width="1.6"/><path d="M9,160 Q12,155 16,159" fill="none" stroke="#ddd"/>
 <circle cx="12.5" cy="172" r="5.5" fill="none" stroke="#ccc" stroke-width="1" stroke-dasharray="1.5,1"/><circle cx="12.5" cy="172" r="3.5" fill="#aaa"/>
 <rect x="9.5" y="187.5" width="9" height="9" fill="none" stroke="#ddd"/><rect x="6.5" y="191.5" width="6" height="6" fill="#4a4a4a" stroke="#ddd"/>
</svg>

</div>
<div id="task" class="a">
  <svg class="a" style="left:0;top:0" width="960" height="29" viewBox="0 510 960 29">
 <path d="M11,520.5 L16.5,519.7 L16.5,524.5 L11,524.5 Z M17.5,519.5 L23.5,518.7 L23.5,524.5 L17.5,524.5 Z M11,525.5 L16.5,525.5 L16.5,530.3 L11,529.5 Z M17.5,525.5 L23.5,525.5 L23.5,531.3 L17.5,530.5 Z" fill="#f4f4f4"/>
 <circle cx="52.5" cy="522.5" r="4" fill="none" stroke="#eee" stroke-width="1.2"/><path d="M49.5,525.5 L44.5,530.5" stroke="#eee" stroke-width="1.3"/>
 <rect x="79.5" y="519.5" width="11" height="10" rx="1" fill="none" stroke="#eee"/><path d="M77.5,521 L77.5,528 M92.5,521 L92.5,528" stroke="#eee"/>
 <rect x="138" y="510" width="34" height="29" fill="#2b2e34"/>
 <path d="M112.5,519 L118,519 L119.5,521 L127.5,521 L127.5,531 L112.5,531 Z" fill="#f2cf73"/>
 <path d="M114,525 L126,525 L126,531 L123,531 L123,528 L117,528 L117,531 L114,531 Z" fill="#3a9ee4"/>
 <rect x="146.5" y="516.5" width="15" height="15" fill="#2a1406" stroke="#e07a2a"/>
 <text x="149" y="528" font-size="10" font-weight="bold" fill="#f08c3c" font-family="Liberation Sans">Ai</text>
 <circle cx="189" cy="525" r="8" fill="#d94a3a"/>
 <path d="M189,525 L182.1,529 A8,8 0 0 0 193,531.9 Z" fill="#2ea34a"/>
 <path d="M189,525 L193,531.9 A8,8 0 0 0 189,517 L189,521 Z" fill="#f5c52c"/>
 <path d="M189,517 A8,8 0 0 1 196,521 L189,521 Z" fill="#d94a3a"/>
 <circle cx="189" cy="525" r="3.6" fill="#fff"/><circle cx="189" cy="525" r="2.8" fill="#3b82e6"/>
 <rect x="106" y="537" width="29" height="2" fill="#e8dcc4"/>
 <rect x="138" y="537" width="34" height="2" fill="#e8dcc4"/>
 <rect x="175" y="537" width="28" height="2" fill="#e8dcc4"/>
 <path d="M827.5,527 L831.5,522 L835.5,527" fill="none" stroke="#eee" stroke-width="1.1"/>
 <rect x="845.5" y="520.5" width="9" height="7" fill="none" stroke="#ddd"/><path d="M850,528 L850,530 M847,530.5 L853,530.5 M843,520 L843,524 M842,521 L845,521" stroke="#ddd"/>
 <path d="M860,523 L862,523 L865,520 L865,530 L862,527 L860,527 Z" fill="none" stroke="#ddd"/><path d="M867,522.5 Q868.5,525 867,527.5 M869,521 Q871.5,525 869,529" fill="none" stroke="#ddd"/>
 <rect x="931.5" y="519.5" width="12" height="9" fill="none" stroke="#eee"/><path d="M935,528.5 L937,531 L939,528.5" fill="#07060b" stroke="#eee"/>
</svg>
<div class="t" style="left:883px;top:3.5px;font-size:9px;color:#f0f0f0;letter-spacing:-0.35px">8:38 PM</div>
<div class="t" style="left:878px;top:15.5px;font-size:9px;color:#f0f0f0;letter-spacing:-0.5px">10/04/2018</div>

</div>
<!-- ARTBOARD -->
<div class="a" style="left:189px;top:65px;width:430px;height:429px;background:#fff;border:1px solid #2a2a2a;box-shadow:1px 1px 0 #3e3e3e"></div>
<div class="a" style="left:200.2px;top:75px;width:410px;height:408.4px;border-radius:50%;background:radial-gradient(ellipse 480px 420px at 196.8px 400px, #00f8ff 0%, #00f0fa 24%, #06dcf0 36%, #12bce2 46%, #18a4d6 55%, #1a92cc 64%, #1e80c4 75%, #2472bc 88%, #2a60b0 100%)"></div>
<div class="a" style="left:200.2px;top:75px;width:410px;height:408.4px;-webkit-mask-image:linear-gradient(90deg,#000 0px,#000 105px,transparent 150px);mask-image:linear-gradient(90deg,#000 0px,#000 105px,transparent 150px)"><div class="a" style="left:0;top:0;width:410px;height:408.4px;border-radius:50%;background:radial-gradient(circle at 309.8px 335.0px, rgba(0,10,60,0) 0px, rgba(0,10,60,0.07) 100.5px, rgba(0,10,60,0) 128px, rgba(0,10,60,0.07) 128.5px, rgba(0,10,60,0) 158px, rgba(0,10,60,0.07) 158.5px, rgba(0,10,60,0) 190px, rgba(0,10,60,0.07) 190.5px, rgba(0,10,60,0) 224px, rgba(0,10,60,0.07) 224.5px, rgba(0,10,60,0) 259px, rgba(0,10,60,0.07) 259.5px, rgba(0,10,60,0) 300px, rgba(0,10,60,0) 600px);-webkit-mask-image:linear-gradient(180deg, transparent 0px, transparent 200px, #000 270px, #000 330px, transparent 390px);mask-image:linear-gradient(180deg, transparent 0px, transparent 200px, #000 270px, #000 330px, transparent 390px)"></div></div>
<div class="a" style="left:200.2px;top:75px;width:410px;height:408.4px;-webkit-mask-image:linear-gradient(90deg,transparent 0px,transparent 105px,#000 150px,#000 260px,transparent 330px);mask-image:linear-gradient(90deg,transparent 0px,transparent 105px,#000 150px,#000 260px,transparent 330px)"><div class="a" style="left:0;top:0;width:410px;height:408.4px;border-radius:50%;background:radial-gradient(circle at 199.8px 395.0px, rgba(0,10,60,0) 0px, rgba(0,10,60,0.06) 60.5px, rgba(0,10,60,0) 80px, rgba(0,10,60,0.06) 80.5px, rgba(0,10,60,0) 102px, rgba(0,10,60,0.06) 102.5px, rgba(0,10,60,0) 128px, rgba(0,10,60,0.06) 128.5px, rgba(0,10,60,0) 160px, rgba(0,10,60,0.06) 160.5px, rgba(0,10,60,0) 200px, rgba(0,10,60,0.06) 200.5px, rgba(0,10,60,0) 240px, rgba(0,10,60,0) 600px);-webkit-mask-image:linear-gradient(180deg, transparent 0px, transparent 200px, #000 270px, #000 330px, transparent 390px);mask-image:linear-gradient(180deg, transparent 0px, transparent 200px, #000 270px, #000 330px, transparent 390px)"></div></div>
<div class="a" style="left:200.2px;top:75px;width:410px;height:408.4px;-webkit-mask-image:radial-gradient(circle at 199.8px 395px, transparent 0px, transparent 70px, #000 165px);mask-image:radial-gradient(circle at 199.8px 395px, transparent 0px, transparent 70px, #000 165px)"><div class="a" style="left:0;top:0;width:410px;height:408.4px;border-radius:50%;background:conic-gradient(from 0deg at 103.8px 265.0px, rgba(0,10,60,0.00) 0.0deg, rgba(0,10,60,0.00) 15.1deg, rgba(0,10,60,0.00) 15.1deg, rgba(0,10,60,0.20) 39.1deg, rgba(0,10,60,0.00) 39.3deg, rgba(0,10,60,0.20) 59.9deg, rgba(0,10,60,0.00) 60.1deg, rgba(0,10,60,0.16) 78.2deg, rgba(0,10,60,0.02) 78.4deg, rgba(0,10,60,0.14) 92.8deg, rgba(0,10,60,0.12) 93.0deg, rgba(0,10,60,0.20) 104.2deg, rgba(0,10,60,0.12) 104.4deg, rgba(0,10,60,0.16) 111.9deg, rgba(0,10,60,0.08) 112.1deg, rgba(0,10,60,0.00) 139.8deg, rgba(0,10,60,0.00) 140.0deg, rgba(0,10,60,0.00) 360.0deg);-webkit-mask-image:radial-gradient(circle at 103.8px 265.0px, transparent 0px, transparent 50px, #000 130px);mask-image:radial-gradient(circle at 103.8px 265.0px, transparent 0px, transparent 50px, #000 130px)"></div></div>
<div class="a" style="left:200.2px;top:75px;width:410px;height:408.4px;border-radius:50%;background:conic-gradient(from 0deg at 30.8px 411px, rgba(0,10,60,0.15) 0.0deg, rgba(0,10,60,0.16) 1.5deg, rgba(0,10,60,0.00) 1.7deg, rgba(0,10,60,0.20) 19.2deg, rgba(0,10,60,0.00) 19.4deg, rgba(0,10,60,0.00) 330.0deg, rgba(0,10,60,0.15) 360.0deg);-webkit-mask-image:linear-gradient(180deg,#000 0px,#000 150px,transparent 200px);mask-image:linear-gradient(180deg,#000 0px,#000 150px,transparent 200px)"></div>
<svg class="a" style="left:0;top:0" width="960" height="539" viewBox="0 0 960 539"><defs><clipPath id="oc"><ellipse cx="405.2" cy="279.2" rx="205" ry="204.2"/></clipPath></defs><g clip-path="url(#oc)"></g></svg>
<svg class="a" style="left:0;top:0" width="960" height="539" viewBox="0 0 960 539">
<defs>
<radialGradient id="lg" gradientUnits="userSpaceOnUse" cx="392" cy="455" r="390" fx="392" fy="455">
<stop offset="0" stop-color="#00f4fa"/>
<stop offset="0.18" stop-color="#02e8f4"/>
<stop offset="0.34" stop-color="#12bce2"/>
<stop offset="0.46" stop-color="#18a2d6"/>
<stop offset="0.58" stop-color="#1a8cca"/>
<stop offset="0.71" stop-color="#2078c0"/>
<stop offset="0.86" stop-color="#2466b6"/>
<stop offset="1" stop-color="#2a52a6"/>
</radialGradient>
</defs>

<path fill="#fff" d="M252,357 A174,174 0 1 1 502.2,421.3 L500.3,416.1 C500.9,416.2 503.2,417.0 504.2,416.8 C505.2,416.6 505.8,415.1 506.1,414.8 C505.8,413.8 504.7,411.1 504.2,409.0 C503.7,406.9 503.5,404.4 502.9,402.5 C502.2,400.6 501.6,398.8 500.3,397.3 C499.0,395.8 497.1,394.5 495.1,393.4 C493.2,392.3 491.2,391.4 488.6,390.8 C486.0,390.2 481.7,390.4 479.5,389.5 C477.3,388.6 476.9,386.7 475.6,385.6 C474.3,384.5 473.4,383.6 471.7,383.0 C470.0,382.4 467.1,382.6 465.2,381.7 C463.2,380.8 462.0,379.4 460.0,377.8 C458.0,376.2 456.0,374.1 453.4,371.9 C450.8,369.7 447.5,367.2 444.5,364.5 C441.5,361.8 438.6,358.6 435.6,355.6 C432.6,352.6 429.7,349.7 426.7,346.7 C423.7,343.7 420.8,340.8 417.8,337.8 C414.8,334.8 411.9,332.2 408.9,328.9 C405.9,325.6 402.7,321.7 400.0,318.2 C397.3,314.7 394.8,311.1 392.6,307.9 C390.4,304.7 388.4,302.0 386.7,299.0 C385.0,296.0 383.8,293.1 382.3,290.1 C380.8,287.1 378.6,282.7 377.8,281.2 L386.7,276.0 C387.2,276.5 388.2,277.8 389.7,278.9 C391.2,280.0 393.4,281.5 395.6,282.6 C397.8,283.7 400.5,285.4 403.0,285.6 C405.5,285.9 407.2,285.2 410.4,284.1 C413.6,283.0 418.8,280.5 422.3,278.9 C425.8,277.3 428.1,276.8 431.2,274.5 C434.3,272.2 438.1,267.7 440.8,264.9 C443.5,262.1 446.2,258.7 447.3,257.5 L449.2,252.0 C450.0,251.5 451.5,250.4 453.8,249.2 C456.1,247.9 460.0,246.5 463.1,244.5 C466.2,242.5 469.9,239.9 472.4,237.1 C474.9,234.3 476.4,231.2 477.9,227.8 C479.4,224.4 481.0,218.5 481.6,216.7 C482.1,216.2 483.6,212.8 484.4,213.5 C485.2,214.2 486.1,219.8 486.5,221.0 C487.1,219.3 489.2,214.0 490.0,211.1 C490.8,208.2 491.3,206.2 491.3,203.5 C491.3,200.8 490.9,198.3 490.2,194.6 C489.4,190.9 487.9,185.8 486.8,181.3 C485.7,176.9 484.6,172.0 483.5,167.9 C482.4,163.8 481.8,160.3 480.1,156.8 C478.4,153.3 476.5,150.0 473.5,146.7 C470.5,143.3 466.4,139.7 462.3,136.7 C458.2,133.7 453.8,131.1 449.0,128.9 C444.2,126.7 438.2,124.5 433.4,123.4 C428.6,122.3 426.3,121.7 420.0,122.2 C413.7,122.8 402.8,124.2 395.7,126.7 C388.6,129.2 382.1,133.2 377.1,136.9 C372.2,140.6 369.1,144.5 366.0,149.0 C362.9,153.5 360.9,158.6 358.6,163.8 C356.4,169.0 354.0,175.6 352.5,180.0 C351.0,184.4 350.3,186.7 349.5,190.0 C348.7,193.3 348.3,196.9 347.8,200.0 C347.3,203.1 347.0,205.9 346.6,208.6 C346.2,211.3 346.2,214.0 345.7,216.4 C345.2,218.8 344.6,221.0 343.4,222.9 C342.1,224.8 340.4,226.5 338.2,228.1 C336.0,229.7 333.4,231.2 330.4,232.6 C327.4,234.0 324.7,234.5 320.0,236.5 C315.3,238.5 307.2,241.7 302.3,244.5 C297.4,247.3 293.9,249.9 290.4,253.4 C286.9,256.9 284.2,260.9 281.5,265.3 C278.8,269.8 276.3,274.7 274.1,280.1 C271.9,285.5 270.2,291.5 268.2,297.9 C266.2,304.3 264.3,311.8 262.3,318.7 C260.3,325.6 258.0,333.1 256.3,339.5 C254.6,345.9 252.7,354.1 252.0,357.0 Z"/>
<path fill="#fff" d="M375.3,336 C376.7,337.6 381.0,342.1 383.9,345.5 C386.8,348.9 390.5,353.6 392.6,356.5 C394.7,359.4 394.3,360.8 396.5,362.9 C398.7,365.0 402.1,366.6 406.0,369.2 C409.9,371.8 415.2,375.5 420.2,378.6 C425.2,381.7 430.4,385.1 436.0,388.0 C441.6,390.9 451.1,394.7 454.1,396.0 C451.1,396.1 441.6,396.5 436.0,396.8 C430.4,397.1 425.5,397.1 420.2,397.6 C414.9,398.1 408.9,399.1 404.4,399.9 C399.9,400.7 395.2,401.9 393.4,402.3 C393.0,401.0 391.8,397.3 391.0,394.4 C390.2,391.5 389.5,388.7 388.7,385.0 C387.9,381.3 387.4,376.0 386.3,372.3 C385.2,368.6 383.6,366.6 382.4,362.9 C381.2,359.2 380.4,354.7 379.2,350.2 C378.0,345.7 375.9,338.4 375.3,336.0 Z"/>
</svg>
</body></html>
